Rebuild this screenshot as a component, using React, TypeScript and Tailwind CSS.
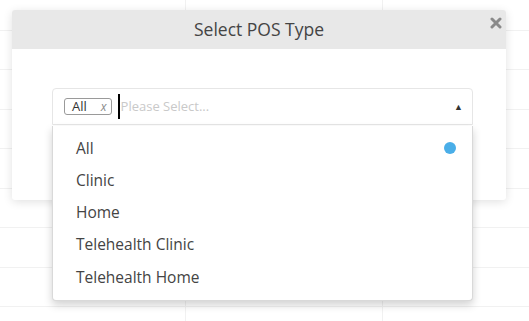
import {useState} from 'react'

const options = ['All', 'Clinic', 'Home', 'Telehealth Clinic', 'Telehealth Home']

function BackgroundTable() {
  const rows = Array.from({length: 9})
  return (
    <div className="-mt-[9px]">
      {rows.map((_, i) => (
        <div key={i} className="grid grid-cols-[186px_197px_1fr] h-[39.5px] border-b border-[#f1f1f1]">
          <div className="border-r border-[#f1f1f1]" />
          <div className="border-r border-[#f1f1f1]" />
          <div />
        </div>
      ))}
    </div>
  )
}

export default function App() {
  const [selected] = useState('All')

  return (
    <div className="relative w-[529px] h-[321px] overflow-hidden bg-white" style={{fontFamily: '"Open Sans", sans-serif'}}>
      <BackgroundTable />

      <div className="absolute left-[12px] top-[10px] w-[494px] h-[190px] bg-white rounded-[3px] shadow-[0_2px_10px_rgba(0,0,0,0.12)]">
        <div className="relative h-[39px] bg-[#e8e8e8] rounded-t-[3px] flex items-center justify-center">
          <span className="text-[17.5px] text-[#444]">Select POS Type</span>
          <button className="absolute right-[4px] top-[7px] text-[#8a8a8a]" aria-label="Close">
            <svg width="12" height="12" viewBox="0 0 12 12">
              <path d="M2 2 L10 10 M10 2 L2 10" stroke="currentColor" strokeWidth="3" strokeLinecap="round" />
            </svg>
          </button>
        </div>

        <div className="pl-[40px] pt-[39px]">
          <div className="relative w-[421px]">
            <div className="h-[37px] border border-[#e6e6e6] rounded-t-[4px] flex items-center pl-[11px] pr-[9px] bg-white">
              <span className="flex items-center h-[17px] border border-[#9a9a9a] rounded-[3px] pl-[7px] pr-[4px] text-[13px] text-[#333] leading-none">
                All
                <span className="ml-[14px] italic text-[#888] text-[12px]">x</span>
              </span>
              <span className="ml-[6px] w-[2px] h-[25px] bg-black" />
              <span className="ml-[1px] text-[13px] text-[#c9c9c9]">Please Select...</span>
              <span className="ml-auto text-[9px] text-[#333]">▲</span>
            </div>

            <div className="absolute left-0 right-0 top-[38px] bg-white border border-[#d9d9d9] border-t-0 rounded-b-[4px] shadow-[0_4px_8px_rgba(0,0,0,0.18)] pt-[6px] pb-[7px] z-10">
              {options.map((o) => (
                <div key={o} className="flex items-center justify-between h-[32.25px] pl-[23px] pr-[16px] text-[15.5px] text-[#444]">
                  <span>{o}</span>
                  {o === selected && <span className="w-[12px] h-[12px] rounded-full bg-[#4aaee8]" />}
                </div>
              ))}
            </div>
          </div>
        </div>
      </div>
    </div>
  )
}
